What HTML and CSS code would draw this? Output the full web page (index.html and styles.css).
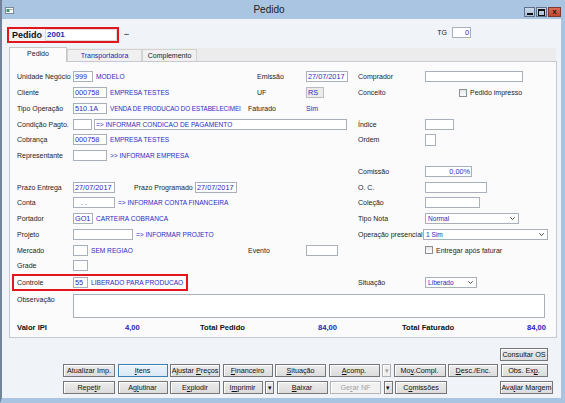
FILE: index.html
```html
<!DOCTYPE html>
<html lang="pt-BR">
<head>
  <meta charset="UTF-8" />
  <title>Pedido</title>
  <link rel="stylesheet" href="styles.css">
</head>
<body>
<div class="window">
  <div class="titlebar">
    <svg class="app-icon" width="9" height="7" viewBox="0 0 9 7">
      <rect x="0.5" y="0.5" width="8" height="6" fill="#fff" stroke="#7b8a99"/>
      <rect x="1.5" y="2" width="3" height="3" fill="#3a9a5a"/>
      <rect x="5" y="2" width="2.5" height="1" fill="#99a4ad"/>
    </svg>
    <span class="title">Pedido</span>
    <div class="wbtns">
      <span class="wb wb-min"></span>
      <span class="wb wb-max"></span>
      <span class="wb wb-close">x</span>
    </div>
  </div>

  <div class="client">
    <div class="head">
      <div class="order-box">
        <span class="order-lbl">Pedido</span>
        <span class="order-num">2001</span>
      </div>
      <span class="dots">...</span>
      <span class="tg">TG</span>
      <span class="in tgval">0</span>
    </div>

    <div class="tabs">
      <span class="tab active">Pedido</span>
      <span class="tab t2">Transportadora</span>
      <span class="tab t3">Complemento</span>
    </div>

    <div class="panel">
      <div class="row">
        <div class="lft">
          <span class="lbl">Unidade Negócio</span>
          <div class="cb"><span class="in w20">999</span><span class="v">MODELO</span></div>
          <span class="cc ind">Emissão</span>
          <div class="cd"><span class="in w42">27/07/2017</span></div>
        </div>
        <span class="rl">Comprador</span>
        <div class="rf"><span class="in w98"></span></div>
      </div>

      <div class="row">
        <div class="lft">
          <span class="lbl">Cliente</span>
          <div class="cb"><span class="in w34">000758</span><span class="v">EMPRESA TESTES</span></div>
          <span class="cc ind">UF</span>
          <div class="cd"><span class="in w18 ro">RS</span></div>
        </div>
        <span class="rl">Conceito</span>
        <div class="rf"><span class="chk ml34"></span><span class="chk-lbl">Pedido impresso</span></div>
      </div>

      <div class="row">
        <div class="lft">
          <span class="lbl">Tipo Operação</span>
          <div class="cb"><span class="in w34">510.1A</span><span class="v tight">VENDA DE PRODUCAO DO ESTABELECIMEI</span></div>
          <span class="cc">Faturado</span>
          <div class="cd"><span class="blue">Sim</span></div>
        </div>
      </div>

      <div class="row">
        <div class="lft">
          <span class="lbl">Condição Pagto.</span>
          <div class="cw"><span class="in w19"></span><span class="in w253 cap">=&gt; INFORMAR CONDICAO DE PAGAMENTO</span></div>
        </div>
        <span class="rl">Índice</span>
        <div class="rf"><span class="in w29"></span></div>
      </div>

      <div class="row">
        <div class="lft">
          <span class="lbl">Cobrança</span>
          <div class="cb"><span class="in w34">000758</span><span class="v">EMPRESA TESTES</span></div>
        </div>
        <span class="rl">Ordem</span>
        <div class="rf"><span class="in sq"></span></div>
      </div>

      <div class="row">
        <div class="lft">
          <span class="lbl">Representante</span>
          <div class="cb"><span class="in w34"></span><span class="v">&gt;&gt; INFORMAR EMPRESA</span></div>
        </div>
      </div>

      <div class="row">
        <div class="lft"></div>
        <span class="rl">Comissão</span>
        <div class="rf"><span class="in w47 right">0,00%</span></div>
      </div>

      <div class="row">
        <div class="lft">
          <span class="lbl">Prazo Entrega</span>
          <div class="cw"><span class="in w42">27/07/2017</span><span class="pp">Prazo Programado</span><span class="in w42">27/07/2017</span></div>
        </div>
        <span class="rl">O. C.</span>
        <div class="rf"><span class="in w62"></span></div>
      </div>

      <div class="row">
        <div class="lft">
          <span class="lbl">Conta</span>
          <div class="cb"><span class="in w42 dotted">. .</span><span class="v">=&gt; INFORMAR CONTA FINANCEIRA</span></div>
        </div>
        <span class="rl">Coleção</span>
        <div class="rf"><span class="in w55"></span></div>
      </div>

      <div class="row">
        <div class="lft">
          <span class="lbl">Portador</span>
          <div class="cb"><span class="in w20">GO1</span><span class="v">CARTEIRA COBRANCA</span></div>
        </div>
        <span class="rl">Tipo Nota</span>
        <div class="rf">
          <span class="sel w94">Normal<svg width="5" height="3" viewBox="0 0 5 3"><path d="M0.3 0.3 L2.5 2.5 L4.7 0.3" fill="none" stroke="#333" stroke-width="0.9"/></svg></span>
        </div>
      </div>

      <div class="row">
        <div class="lft">
          <span class="lbl">Projeto</span>
          <div class="cb"><span class="in w60"></span><span class="v">=&gt; INFORMAR PROJETO</span></div>
        </div>
        <span class="rl">Operação presencial</span>
        <div class="rf">
          <span class="sel w125 nudge">1 Sim<svg width="5" height="3" viewBox="0 0 5 3"><path d="M0.3 0.3 L2.5 2.5 L4.7 0.3" fill="none" stroke="#333" stroke-width="0.9"/></svg></span>
        </div>
      </div>

      <div class="row">
        <div class="lft">
          <span class="lbl">Mercado</span>
          <div class="cb"><span class="in w15"></span><span class="v">SEM REGIAO</span></div>
          <span class="cc">Evento</span>
          <div class="cd"><span class="in w32"></span></div>
        </div>
        <span class="rl"></span>
        <div class="rf"><span class="chk"></span><span class="chk-lbl">Entregar após faturar</span></div>
      </div>

      <div class="row">
        <div class="lft">
          <span class="lbl">Grade</span>
          <div class="cb"><span class="in w15"></span></div>
        </div>
      </div>

      <div class="row tall">
        <div class="lft">
          <div class="mark">
            <span class="lbl">Controle</span>
            <span class="in w15">55</span><span class="v">LIBERADO PARA PRODUCAO</span>
          </div>
        </div>
        <span class="rl">Situação</span>
        <div class="rf">
          <span class="sel w52">Liberado<svg width="5" height="3" viewBox="0 0 5 3"><path d="M0.3 0.3 L2.5 2.5 L4.7 0.3" fill="none" stroke="#333" stroke-width="0.9"/></svg></span>
        </div>
      </div>

      <div class="obs">
        <span class="lbl">Observação</span>
        <div class="memo"></div>
      </div>

      <div class="totals">
        <span class="t1">Valor IPI</span>
        <span class="t2">4,00</span>
        <span class="t3">Total Pedido</span>
        <span class="t4">84,00</span>
        <span class="t5">Total Faturado</span>
        <span class="t6">84,00</span>
      </div>
    </div>

    <div class="btnbar">
      <div class="brow end">
        <button class="btn b48">Consultar OS</button>
      </div>
      <div class="brow">
        <button class="btn b52">Atualizar Imp.</button>
        <button class="btn b50 focus"><u>I</u>tens</button>
        <button class="btn b50">Ajustar <u>P</u>reços</button>
        <button class="btn b50"><u>F</u>inanceiro</button>
        <button class="btn b51"><u>S</u>ituação</button>
        <button class="btn b51"><u>A</u>comp.</button>
        <button class="btn arrow off">&#9662;</button>
        <button class="btn b52">Mo<u>v</u>.Compl.</button>
        <button class="btn b50"><u>D</u>esc./Enc.</button>
        <button class="btn b47">Obs. Ex<u>p</u>.</button>
      </div>
      <div class="brow">
        <button class="btn b52">Repe<u>t</u>ir</button>
        <button class="btn b50">Ag<u>l</u>utinar</button>
        <button class="btn b50">E<u>x</u>plodir</button>
        <button class="btn b40">I<u>m</u>primir</button>
        <button class="btn arrow">&#9662;</button>
        <button class="btn b51"><u>B</u>aixar</button>
        <button class="btn b51 disabled">Ge<u>r</u>ar NF</button>
        <button class="btn arrow">&#9662;</button>
        <button class="btn b52">C<u>o</u>missões</button>
        <button class="btn b53 push">Ava<u>l</u>iar Margem</button>
      </div>
    </div>
  </div>
</div>
</body>
</html>
```

FILE: styles.css
```css
* {
  box-sizing: border-box;
}

body {
  margin: 0;
  width: 565px;
  height: 403px;
  overflow: hidden;
  font-family: "Liberation Sans", Arial, sans-serif;
  font-size: 7px;
  color: #1b1b1b;
  background: #a9c4e0;
}

.window {
  height: 403px;
  display: flex;
  flex-direction: column;
  border-left: 2px solid #72839a;
  border-right: 4px solid #a9c4e0;
  border-bottom: 5px solid #a9c4e0;
}

/* title bar */
.titlebar {
  height: 19px;
  flex: none;
  display: flex;
  align-items: flex-start;
  background: #a9c5e1;
}

.app-icon {
  margin: 7px 0 0 3px;
}

.title {
  flex: 1;
  text-align: center;
  font-size: 10px;
  line-height: 20px;
  color: #222;
}

.wbtns {
  display: flex;
  gap: 1px;
  margin-top: 7px;
}

.wb {
  width: 11px;
  height: 10px;
  border: 1px solid #5f7189;
  background: linear-gradient(#c9d9ea, #a9bfd8);
  display: flex;
  align-items: center;
  justify-content: center;
}

.wb-min {
  align-items: flex-end;
  padding-bottom: 1px;
}

.wb-min::after {
  content: "";
  width: 6px;
  height: 2px;
  background: #111;
}

.wb-max::after {
  content: "";
  width: 5px;
  height: 4px;
  border: 1px solid #111;
  border-top-width: 2px;
}

.wb-close {
  width: 13px;
  border-color: #7d3a2f;
  background: linear-gradient(#db6b55, #c4442f);
  color: #1a1a1a;
  font-weight: bold;
  font-size: 8px;
  line-height: 8px;
}

/* client */
.client {
  flex: 1;
  display: flex;
  flex-direction: column;
  background: #f0f3f8;
}

.head {
  height: 29px;
  flex: none;
  display: flex;
  align-items: flex-start;
  padding: 8px 0 0 5px;
}

.order-box {
  width: 112px;
  height: 16px;
  border: 2px solid #e3151d;
  display: flex;
}

.order-lbl {
  width: 36px;
  padding-left: 3px;
  font-weight: bold;
  font-size: 9px;
  line-height: 12px;
  color: #111;
  background: #f3f3f3;
}

.order-num {
  flex: 1;
  background: #fff;
  border: 1px solid #d9d9d9;
  color: #2424b8;
  font-weight: bold;
  font-size: 8px;
  line-height: 10px;
  padding-left: 1px;
}

.dots {
  margin-left: 5px;
  font-weight: bold;
  line-height: 12px;
  letter-spacing: -0.5px;
}

.tg {
  margin-left: auto;
  margin-right: 5px;
  line-height: 12px;
}

.tgval {
  width: 19px;
  height: 12px;
  margin-right: 90px;
  text-align: right;
}

/* tabs */
.tabs {
  height: 13px;
  flex: none;
  margin: 0 5px 0 7px;
  background: #ececec;
  display: flex;
  align-items: flex-end;
}

.tab {
  height: 12px;
  width: 54px;
  border: 1px solid #d2d2d2;
  border-bottom: 0;
  background: #f0f0f0;
  text-align: center;
  line-height: 11px;
  color: #222;
}

.tab.active {
  width: 58px;
  height: 15px;
  margin-bottom: -1px;
  background: #fbfbfc;
  border-color: #c6c6c6;
  line-height: 12px;
  position: relative;
}

.tab.t3 {
  width: 55px;
}

/* main panel */
.panel {
  margin: 0 4px 0 7px;
  border: 1px solid #c6cad0;
  background: #fbfbfc;
  padding: 7px 0 1px 7px;
}

.row {
  display: flex;
  align-items: center;
  height: 15.75px;
}

.row.tall {
  height: 17px;
}

.lft {
  width: 341px;
  flex: none;
  display: flex;
  align-items: center;
}

.lbl {
  width: 56px;
  flex: none;
  white-space: nowrap;
}

.cb {
  width: 175px;
  flex: none;
  display: flex;
  align-items: center;
  overflow: hidden;
  white-space: nowrap;
}

.cw {
  flex: 1;
  display: flex;
  align-items: center;
  white-space: nowrap;
}

.cc {
  width: 58px;
  flex: none;
}

.cc.ind {
  padding-left: 9px;
}

.cd {
  flex: 1;
  display: flex;
  align-items: center;
}

.rl {
  width: 67px;
  flex: none;
  white-space: nowrap;
}

.rf {
  flex: 1;
  display: flex;
  align-items: center;
}

.in {
  display: block;
  flex: none;
  height: 11px;
  border: 1px solid #a9b0b9;
  background: #fff;
  color: #2b2bc0;
  font-size: 7.3px;
  line-height: 9px;
  padding: 0 1px;
  white-space: nowrap;
  overflow: hidden;
}

.in.ro {
  background: #ebebeb;
  border-color: #b9bdc2;
}

.in.right {
  text-align: right;
}

.in.cap {
  font-size: 6.6px;
  margin-left: 2px;
}

.in.dotted {
  padding-left: 7px;
}

.in.sq {
  width: 11px;
  height: 12px;
}

.w15 { width: 15px; }
.w18 { width: 18px; }
.w19 { width: 19px; }
.w20 { width: 20px; }
.w29 { width: 29px; }
.w32 { width: 32px; }
.w34 { width: 34px; }
.w42 { width: 42px; }
.w47 { width: 47px; }
.w52 { width: 52px; }
.w55 { width: 55px; }
.w60 { width: 60px; }
.w62 { width: 62px; }
.w94 { width: 94px; }
.w98 { width: 98px; }
.w125 { width: 125px; }
.w253 { width: 253px; }

.v {
  margin-left: 3px;
  color: #2b2bc0;
  font-size: 6.6px;
  white-space: nowrap;
}

.v.tight {
  font-size: 6.3px;
  letter-spacing: -0.05px;
}

.blue {
  color: #2b2bc0;
}

.pp {
  margin-left: 19px;
  width: 61px;
  flex: none;
}

.chk {
  width: 8px;
  height: 8px;
  flex: none;
  border: 1px solid #8c8f94;
  background: linear-gradient(#e6e6e6, #fff);
}

.ml34 {
  margin-left: 34px;
}

.chk-lbl {
  margin-left: 3px;
  white-space: nowrap;
}

.sel {
  height: 11px;
  flex: none;
  display: flex;
  align-items: center;
  justify-content: space-between;
  border: 1px solid #a9b0b9;
  background: #fff;
  color: #2b2bc0;
  padding: 0 3px 0 2px;
  font-size: 6.6px;
}

.sel.nudge {
  margin-left: -2px;
}

.mark {
  width: 176px;
  height: 17px;
  margin-left: -5px;
  padding-left: 3px;
  border: 2px solid #e3151d;
  display: flex;
  align-items: center;
}

.obs {
  display: flex;
  align-items: flex-start;
  margin-top: 3px;
}

.obs .lbl {
  padding-top: 2px;
}

.memo {
  width: 472px;
  height: 24px;
  border: 1px solid #a9b0b9;
  background: #fff;
}

.totals {
  display: flex;
  align-items: center;
  height: 16px;
  margin-top: 2px;
  font-weight: bold;
  font-size: 7.6px;
  color: #111;
  white-space: nowrap;
}

.t1 { width: 108px; }
.t2 { width: 75px; color: #2424b4; }
.t3 { width: 118px; }
.t4 { width: 84px; color: #2424b4; }
.t5 { width: 125px; }
.t6 { color: #2424b4; }

/* buttons */
.btnbar {
  display: flex;
  flex-direction: column;
  gap: 3.5px;
  padding: 10px 0 0 61px;
}

.brow {
  width: 490px;
  display: flex;
  gap: 2.5px;
}

.brow.end {
  justify-content: flex-end;
}

.btn {
  height: 13px;
  flex: none;
  padding: 0;
  border: 1px solid #767676;
  background: linear-gradient(#ececec, #dcdcdc);
  box-shadow: inset 1px 1px 0 #fff;
  font-family: inherit;
  font-size: 7.2px;
  line-height: 11px;
  color: #111;
  text-align: center;
  white-space: nowrap;
}

.btn u {
  text-decoration-thickness: 0.5px;
  text-underline-offset: 1px;
}

.btn.focus {
  border-color: #3c7fb1;
  background: linear-gradient(#eaf3fb, #dbe9f5);
}

.btn.disabled {
  color: #a3a3a3;
  border-color: #b5b5b5;
  background: #f1f1f1;
}

.btn.arrow {
  width: 9px;
  font-size: 7px;
  color: #111;
}

.btn.arrow.off {
  color: #a0a0a0;
  border-color: #b0b0b0;
  background: #efefef;
}

.b40 { width: 40px; }
.b47 { width: 47px; }
.b48 { width: 48px; margin-right: 5px; }
.b50 { width: 50px; }
.b51 { width: 51px; }
.b52 { width: 52px; }
.b53 { width: 53px; }

.push {
  margin-left: auto;
}
```
